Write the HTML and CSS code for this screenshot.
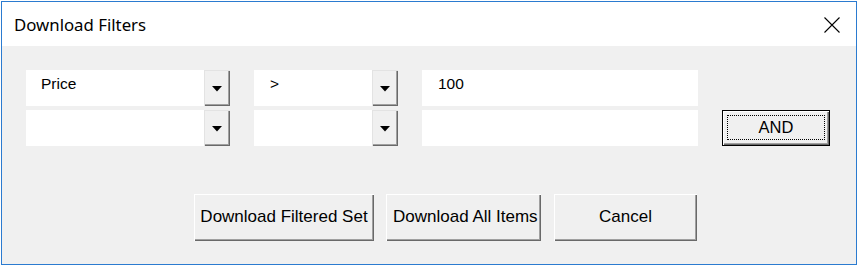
FILE: index.html
```html
<!DOCTYPE html>
<html>
<head>
<meta charset="utf-8">
<link rel="stylesheet" href="styles.css">
</head>
<body>
<div class="window">
  <div class="titlebar">
    <span class="title">Download Filters</span>
    <svg class="close" width="16" height="16" viewBox="0 0 16 16"><path d="M0.5 0.5 L15.5 15.5 M15.5 0.5 L0.5 15.5" stroke="#000" stroke-width="1.1" fill="none"/></svg>
  </div>
  <div class="content">
    <div class="grid">
      <div class="combo wide"><div class="field">Price</div><div class="dd"><svg width="10" height="6" viewBox="0 0 10 6"><path d="M0 0 H10 L5 5.5 Z" fill="#000"/></svg></div></div>
      <div class="combo"><div class="field op">&gt;</div><div class="dd"><svg width="10" height="6" viewBox="0 0 10 6"><path d="M0 0 H10 L5 5.5 Z" fill="#000"/></svg></div></div>
      <div class="field val">100</div>
      <div></div>
      <div class="combo wide"><div class="field"></div><div class="dd"><svg width="10" height="6" viewBox="0 0 10 6"><path d="M0 0 H10 L5 5.5 Z" fill="#000"/></svg></div></div>
      <div class="combo"><div class="field"></div><div class="dd"><svg width="10" height="6" viewBox="0 0 10 6"><path d="M0 0 H10 L5 5.5 Z" fill="#000"/></svg></div></div>
      <div class="field val"></div>
      <div class="and">AND</div>
    </div>
    <div class="buttons">
      <div class="btn b1">Download Filtered Set</div>
      <div class="btn b2">Download All Items</div>
      <div class="btn b3">Cancel</div>
    </div>
  </div>
</div>
</body>
</html>
```

FILE: styles.css
```css
html, body {
  margin: 0;
  padding: 0;
  background: #ffffff;
}
body {
  width: 858px;
  height: 266px;
  overflow: hidden;
  font-family: "Liberation Sans", Arial, sans-serif;
  color: #000;
}
.window {
  box-sizing: border-box;
  margin: 1px 0 0 1px;
  width: 856px;
  height: 264px;
  border: 1px solid #2b7bd0;
  background: #f0f0f0;
  display: flex;
  flex-direction: column;
}
.titlebar {
  height: 44px;
  background: #ffffff;
  display: flex;
  align-items: center;
  justify-content: space-between;
  padding: 0 16px 0 12px;
}
.title {
  font-family: "Noto Sans", "Open Sans", sans-serif;
  font-size: 16.8px;
  color: #000;
  padding-top: 1px;
}
.close {
  display: block;
  margin-top: 1px;
}
.content {
  padding: 24px 0 0 24px;
}
.grid {
  display: grid;
  grid-template-columns: 204px 144px 276px 108px;
  grid-template-rows: 36px 36px;
  column-gap: 24px;
  row-gap: 4px;
}
.combo {
  display: flex;
}
.field {
  flex: 1;
  background: #ffffff;
  height: 36px;
  box-sizing: border-box;
  padding: 4px 0 0 15px;
  font-size: 15.5px;
  line-height: 20px;
}
.field.op, .field.val {
  padding-left: 16px;
}
.dd {
  width: 26px;
  height: 36px;
  box-sizing: border-box;
  background: #f0f0f0;
  box-shadow: inset 1px 1px 0 #e3e3e3, inset -1px -1px 0 #696969, inset -2px -2px 0 #a0a0a0;
  display: flex;
  align-items: center;
  justify-content: center;
  padding: 2px 1px 0 0;
}
.dd svg {
  display: block;
}
.and {
  position: relative;
  box-sizing: border-box;
  border: 1px solid #000;
  background: #f0f0f0;
  box-shadow: inset 1px 1px 0 #ffffff, inset -1px -1px 0 #696969, inset -2px -2px 0 #a0a0a0;
  display: flex;
  align-items: center;
  justify-content: center;
  font-size: 16.5px;
  padding-bottom: 1px;
}
.and::after {
  content: "";
  position: absolute;
  left: 4px;
  top: 4px;
  right: 4px;
  bottom: 5px;
  border: 1px dotted #000;
}
.buttons {
  display: flex;
  gap: 12px;
  margin-top: 48px;
  padding-left: 168px;
}
.btn {
  box-sizing: border-box;
  height: 47px;
  background: #f0f0f0;
  box-shadow: inset 1px 1px 0 #ffffff, inset -1px -1px 0 #696969, inset -2px -2px 0 #a0a0a0;
  display: flex;
  align-items: center;
  justify-content: center;
  font-size: 17px;
  white-space: nowrap;
  overflow: hidden;
  padding-bottom: 1px;
}
.b1 { width: 180px; }
.b2 { width: 155px; justify-content: flex-start; padding-left: 7px; }
.b3 { width: 143px; margin-left: 1px; }
```
